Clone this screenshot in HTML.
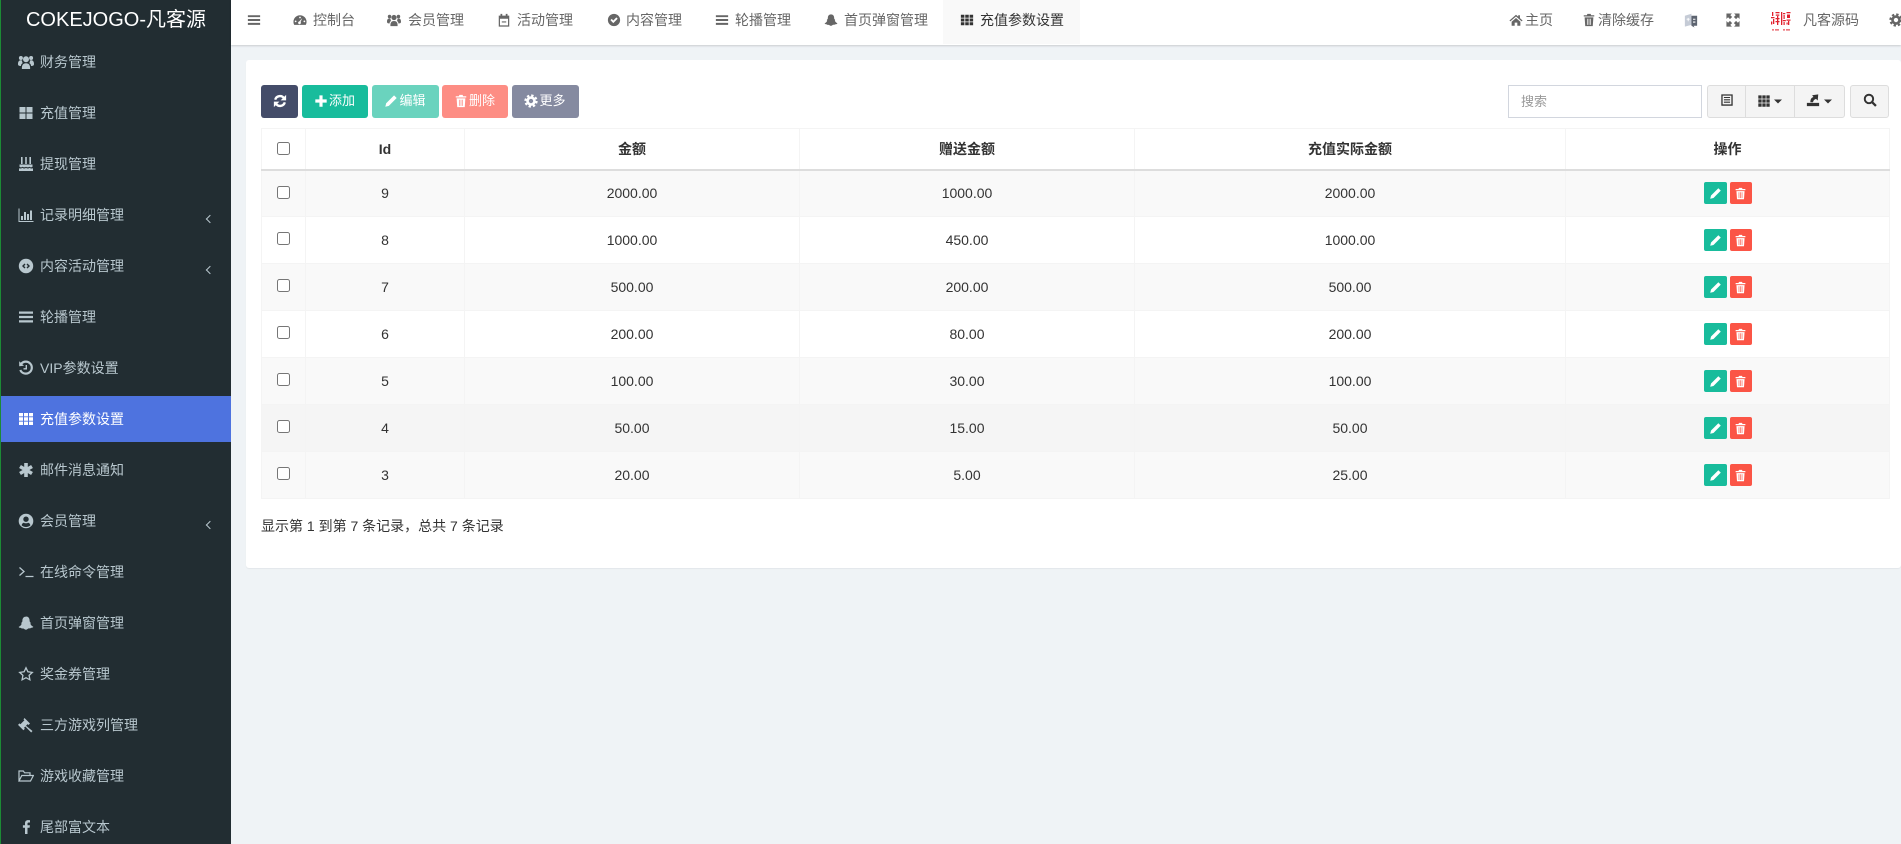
<!DOCTYPE html>
<html lang="zh-CN"><head><meta charset="utf-8"><title>充值参数设置</title>
<style>
*{box-sizing:border-box}
html,body{margin:0;padding:0;width:1901px;height:844px;overflow:hidden;background:#eff3f6;font:14px/20px "Liberation Sans","Noto Sans CJK SC",sans-serif;color:#333}
#side{position:absolute;left:0;top:0;width:231px;height:844px;background:#222d32;border-left:1px solid #1c8a35;overflow:hidden}
#logo{position:absolute;left:0;top:6px;width:230px;text-align:center;color:#fff;font-size:20px;line-height:28px}
.m{position:absolute;left:0;width:230px;height:46px;color:#b8c7ce}
.m.on{background:#4e73df;color:#fff}
.m span{position:absolute;left:39px;top:13px;white-space:nowrap}
.m svg{position:absolute;left:17px;top:15px;width:16px;height:16px}
.m i{position:absolute;left:206px;top:24px;width:6px;height:6px;border-left:1.4px solid #b8c7ce;border-bottom:1.4px solid #b8c7ce;transform:rotate(45deg)}
#top{position:absolute;left:231px;top:0;width:1670px;height:45px;background:#fff;box-shadow:0 1px 2px rgba(0,0,0,.16)}
.t{position:absolute;top:10px;color:#666;white-space:nowrap}
.ic{position:absolute;top:13px;width:14px;height:14px;color:#666}
#act{position:absolute;left:712px;top:0;width:137px;height:44px;background:#f9f9f9}
#panel{position:absolute;left:246px;top:60px;width:1655px;height:508px;background:#fff;border-radius:3px;box-shadow:0 1px 1px rgba(0,0,0,.05)}
.b{position:absolute;top:85px;height:33px;border-radius:3px;color:#fff;font-size:13px;line-height:32px;white-space:nowrap;text-align:center}
.b svg{width:14px;height:14px;vertical-align:-2.5px;margin:0 1px 0 -1px}
#tb{position:absolute;left:261px;top:128px;width:1628px;border-collapse:collapse;table-layout:fixed}
#tb th,#tb td{border:1px solid #f4f4f4;padding:0;text-align:center;font-size:14px;position:relative}
#tb th{height:41px;border-bottom:2px solid #ddd;font-weight:bold;color:#333}
#tb td{height:47px;color:#333}
#tb tr.s td{background:#f9f9f9}
#tb tr.h td{background:#f5f5f5}
#tb tr.w td{background:#fff}
#tb input{position:absolute;left:15px;top:13px;margin:0;width:13px;height:13px}
#tb td input{top:15px}
.ab{display:inline-block;height:22px;border-radius:2px;vertical-align:middle;position:relative}
.ab svg{position:absolute;left:50%;top:50%;width:13px;height:13px;margin:-6.5px 0 0 -6.5px;color:#fff}
.e{width:23px;background:#18bc9c;margin-right:3px}
.d{width:22px;background:#fb5546}
#q{position:absolute;left:1508px;top:85px;width:194px;height:33px;border:1px solid #d2d6de;background:#fff;color:#999;font-size:13px;line-height:32px;padding-left:12px}
.g{position:absolute;top:85px;height:33px;background:#f4f4f4;border:1px solid #ddd;color:#333}
.g svg{position:absolute;width:14px;height:14px;top:7px;color:#333}
.g svg.c{width:8px;height:8px;top:11px}
</style></head><body>
<svg width="0" height="0" style="position:absolute"><defs>
<symbol id="bars" viewBox="0 0 16 16"><path fill="currentColor" d="M1 2.500h14v2.200H1zM1 6.900h14v2.200H1zM1 11.300h14v2.200H1z"/></symbol>
<symbol id="dash" viewBox="0 0 16 16"><path fill="currentColor" fill-rule="evenodd" d="M8 2.500A7.500 7.500 0 0 0 .5 10c0 1.300.3 2.500.9 3.500h13.200c.6-1 .9-2.200.9-3.500A7.500 7.500 0 0 0 8 2.500zM3 8.500a1 1 0 1 0 0 2 1 1 0 0 0 0-2zM8 4.200a1 1 0 1 0 0 2 1 1 0 0 0 0-2zM13 8.500a1 1 0 1 0 0 2 1 1 0 0 0 0-2zM10.600 5.800 7.200 9.600a1.600 1.600 0 1 0 1.500.6z"/></symbol>
<symbol id="users" viewBox="0 0 16 16"><g fill="currentColor"><circle cx="8" cy="5.200" r="3"/><path d="M3.900 15c-.3-4 1.300-5.800 4.100-5.800s4.400 1.800 4.100 5.800z"/><circle cx="2.900" cy="4" r="2"/><circle cx="13.100" cy="4" r="2"/><path d="M0 10c0-2.500 1-3.800 2.900-3.800.5 0 .9.100 1.300.3-.3.900 0 1.800.6 2.500C3.500 9.700 3 10.700 2.900 12 1 12 0 11.500 0 10zM16 10c0-2.500-1-3.800-2.900-3.800-.5 0-.9.100-1.300.3.300.900 0 1.800-.6 2.500 1.300.7 1.800 1.700 1.900 3 1.900 0 2.900-.5 2.900-2z"/></g></symbol>
<symbol id="cal" viewBox="0 0 16 16"><path fill="currentColor" fill-rule="evenodd" d="M2 3h2V1h2v2h4V1h2v2h2v12.500H2zM3.400 6.500v7.600h9.200V6.500zM5.500 9.500h5v1.300h-5z"/></symbol>
<symbol id="check" viewBox="0 0 16 16"><path fill="currentColor" fill-rule="evenodd" d="M8 1a7 7 0 1 0 0 14A7 7 0 0 0 8 1zM3.900 8.200l1.500-1.500 1.800 1.800 3.500-3.500 1.500 1.500-5 5z"/></symbol>
<symbol id="ghost" viewBox="0 0 16 16"><path fill="currentColor" d="M8 1.500c2.300 0 3.600 1.700 3.600 4 0 1 .2 1.400.9 2 .5.500.2 1-.2 1.100.6 1.900 2.400 2.800 3 3.200-.2 1-1.800.9-2.600 1.200-.6.800-1.500.1-2.600.6-.8.600-1.400 1.100-2.100 1.100s-1.300-.5-2.100-1c-1.100-.5-2 .2-2.600-.6-.8-.3-2.400-.2-2.600-1.200.6-.4 2.400-1.300 3-3.200-.4-.1-.7-.6-.2-1.100.7-.6.9-1 .9-2 0-2.300 1.300-4 3.600-4z"/></symbol>
<symbol id="th" viewBox="0 0 16 16"><path fill="currentColor" d="M1 2h4v3.400H1zM6 2h4v3.400H6zM11 2h4v3.400h-4zM1 6.300h4v3.400H1zM6 6.300h4v3.400H6zM11 6.300h4v3.400h-4zM1 10.600h4V14H1zM6 10.600h4V14H6zM11 10.600h4V14h-4z"/></symbol>
<symbol id="th2" viewBox="0 0 16 16"><path fill="currentColor" d="M1.500 1.500h3.800v3.800H1.500zM6.100 1.500h3.800v3.800H6.100zM10.700 1.500h3.800v3.800h-3.800zM1.500 6.100h3.800v3.800H1.500zM6.100 6.100h3.800v3.800H6.100zM10.700 6.100h3.800v3.800h-3.800zM1.500 10.700h3.800v3.800H1.500zM6.100 10.700h3.800v3.800H6.100zM10.700 10.700h3.800v3.800h-3.800z"/></symbol>
<symbol id="thl" viewBox="0 0 16 16"><path fill="currentColor" d="M1.500 2h6v5.500h-6zM8.500 2h6v5.500h-6zM1.500 8.500h6V14h-6zM8.500 8.500h6V14h-6z"/></symbol>
<symbol id="home" viewBox="0 0 16 16"><path fill="currentColor" d="M8 2 .5 8.500l1 1L8 4l6.500 5.500 1-1-3-2.600V2.500h-2v1.700zM3 10v4.500h3.500V11h3v3.500H13V10L8 5.700z"/></symbol>
<symbol id="trash" viewBox="0 0 16 16"><path fill="currentColor" fill-rule="evenodd" d="M5.500 2.500 6.200 1h3.600l.7 1.500H14V4H2V2.500zM3 5h10l-.7 10H3.700zM5.700 6.500v7h.8v-7zM7.600 6.500v7h.8v-7zM9.500 6.500v7h.8v-7z"/></symbol>
<symbol id="lang" viewBox="0 0 16 16"><path fill="#c5cbd6" d="M1 2.500 8.500.3V13L1 15z"/><path fill="#5d6470" d="M8.500 2.500H15V14h-4l1 2-3.500-2z"/><path fill="#fff" d="M3 6h3.500v1H3zM4.300 5h1v3.800h-1zM10.300 6h2.700v1.200h-2.700zM10.300 9.200h2.700v1.200h-2.700z"/></symbol>
<symbol id="exp" viewBox="0 0 16 16"><path fill="currentColor" d="M.5.500h6.300L4.900 2.400 7 4.500 4.500 7 2.400 4.900.5 6.800zM15.500.5v6.300l-1.900-1.900L11.500 7 9 4.500l2.100-2.100L9.200.5zM.5 15.500V9.200l1.900 1.900L4.500 9 7 11.500l-2.100 2.100 1.900 1.900zM15.500 15.500H9.200l1.900-1.900L9 11.500 11.500 9l2.100 2.100 1.900-1.900z"/></symbol>
<symbol id="gear" viewBox="0 0 16 16"><circle cx="8" cy="8" r="4" fill="none" stroke="currentColor" stroke-width="3"/><circle cx="8" cy="8" r="6.300" fill="none" stroke="currentColor" stroke-width="2.600" stroke-dasharray="2.700 2.250"/></symbol>
<symbol id="ref" viewBox="0 0 16 16"><path fill="none" stroke="currentColor" stroke-width="2.700" d="M2.500 6.500A5.600 5.600 0 0 1 12.500 4.800M13.500 9.500A5.600 5.600 0 0 1 3.500 11.200"/><path fill="currentColor" d="M15 1v6.300H8.700zM1 15V8.700h6.300z"/></symbol>
<symbol id="plus" viewBox="0 0 16 16"><path fill="currentColor" d="M6.200 1.500h3.600v4.700h4.700v3.600H9.800v4.700H6.200V9.800H1.500V6.200h4.700z"/></symbol>
<symbol id="pen" viewBox="0 0 16 16"><path fill="currentColor" d="M11.500 1.500l3 3-9 9-4 1 1-4z"/></symbol>
<symbol id="list" viewBox="0 0 16 16"><path fill="currentColor" fill-rule="evenodd" d="M1.500 1.500h13v13h-13zM3 3v10h10V3zM4.500 4.500h7v1.200h-7zM4.500 7.200h7v1.200h-7zM4.500 9.900h7v1.200h-7z"/></symbol>
<symbol id="expt" viewBox="0 0 16 16"><path fill="currentColor" d="M1 11.300h14V15H1zM5 10.500c0-3 .8-5.200 3.500-6L7 2.500l7-1-.6 7-2-1.800c-1.700.6-3 1.600-3.400 3.800z"/></symbol>
<symbol id="srch" viewBox="0 0 16 16"><circle cx="6.800" cy="6.800" r="4.800" fill="none" stroke="currentColor" stroke-width="2.200"/><path stroke="currentColor" stroke-width="2.600" d="M10.300 10.300l4.500 4.500"/></symbol>
<symbol id="car" viewBox="0 0 8 8"><path fill="currentColor" d="M0 2.500h8L4 6.500z"/></symbol>
<symbol id="cake" viewBox="0 0 16 16"><path fill="currentColor" d="M3 1h1.600v7H3zM7.200 1h1.600v7H7.200zM11.400 1h1.600v7h-1.600zM1.500 8.500h13v2.200c-1 .8-2 .8-3.200 0-1 .8-2.200.8-3.300 0-1.100.8-2.300.8-3.300 0-1.200.8-2.200.8-3.200 0zM1 12.200c1.300.5 2.300.4 3.400-.3 1.200.8 2.300.8 3.600 0 1.300.8 2.400.8 3.600 0 1.100.7 2.100.8 3.400.3V15H1z"/></symbol>
<symbol id="bar" viewBox="0 0 16 16"><path fill="currentColor" d="M.5 1.500h1v12.500h14v1H.5zM3 9h2v4H3zM6 5h2v8H6zM9 7h2v6H9zM12 3.500h2V13h-2z"/></symbol>
<symbol id="circ" viewBox="0 0 16 16"><path fill="currentColor" fill-rule="evenodd" d="M8 .8a7.200 7.200 0 1 0 0 14.400A7.200 7.200 0 0 0 8 .8zM4 8l2.500-2.500 1 1L6 8l1.500 1.500-1 1zM12 8 9.500 10.500l-1-1L10 8 8.500 6.500l1-1z"/></symbol>
<symbol id="hist" viewBox="0 0 16 16"><path fill="none" stroke="currentColor" stroke-width="2.200" d="M3.200 3.800A6 6 0 1 1 2.300 10"/><path fill="currentColor" d="M1.200 1.300 6 5.800l-4.800.4z"/><path fill="none" stroke="currentColor" stroke-width="1.400" d="M8.300 5v3.800h-2.800"/></symbol>
<symbol id="ast" viewBox="0 0 16 16"><path stroke="currentColor" stroke-width="3.600" d="M8 1v14M2 4.500l12 7M14 4.500l-12 7"/></symbol>
<symbol id="ucirc" viewBox="0 0 16 16"><path fill="currentColor" fill-rule="evenodd" d="M8 .7a7.300 7.300 0 1 0 0 14.600A7.300 7.300 0 0 0 8 .7zM8 3.500a2.700 2.700 0 1 1 0 5.400 2.700 2.700 0 0 1 0-5.400zM3.600 12.300C4 10.500 5 9.700 6 9.700c.5.400 1.200.6 2 .6s1.500-.2 2-.6c1 0 2 .8 2.400 2.600-1 1.100-2.600 1.700-4.400 1.700s-3.400-.6-4.400-1.700z"/></symbol>
<symbol id="term" viewBox="0 0 16 16"><path fill="none" stroke="currentColor" stroke-width="1.300" d="M1.500 3.500 6 7.500l-4.500 4M7.500 12.500h8"/></symbol>
<symbol id="star" viewBox="0 0 16 16"><path fill="none" stroke="currentColor" stroke-width="1.300" d="M8 1.800l1.900 4 4.400.6-3.200 3 .8 4.400L8 11.700l-3.900 2.100.8-4.400-3.200-3 4.400-.6z"/></symbol>
<symbol id="gavel" viewBox="0 0 16 16"><path fill="currentColor" d="M6.500 1 12 6.500 10.500 8 9.600 7.100 8 8.700l6.500 5.300-1.300 1.500-5.900-6L6 10.900l.9.900L5.400 13.300 0 7.900 1.500 6.400l.9.900L6.400 3.300l-.9-.9z"/></symbol>
<symbol id="fold" viewBox="0 0 16 16"><path fill="none" stroke="currentColor" stroke-width="1.200" d="M1 13V3h4.300l1.300 1.800h5.400v2.700M1 13l2.800-5.500h11.600L12.500 13z"/></symbol>
<symbol id="fb" viewBox="0 0 16 16"><path fill="currentColor" d="M9.500 15V8.700h2.100l.3-2.500H9.500V4.700c0-.7.2-1.200 1.200-1.200H12V1.200c-.2 0-1-.1-1.900-.1C8.200 1.100 7 2.200 7 4.300v1.900H4.900v2.500H7V15z"/></symbol>
</defs></svg>

<div id="side">
<div id="logo">COKEJOGO-凡客源</div>
<div class="m" style="top:39px"><svg><use href="#users"/></svg><span>财务管理</span></div>
<div class="m" style="top:90px"><svg><use href="#thl"/></svg><span>充值管理</span></div>
<div class="m" style="top:141px"><svg><use href="#cake"/></svg><span>提现管理</span></div>
<div class="m" style="top:192px"><svg><use href="#bar"/></svg><span>记录明细管理</span><i></i></div>
<div class="m" style="top:243px"><svg><use href="#circ"/></svg><span>内容活动管理</span><i></i></div>
<div class="m" style="top:294px"><svg><use href="#bars"/></svg><span>轮播管理</span></div>
<div class="m" style="top:345px"><svg><use href="#hist"/></svg><span>VIP参数设置</span></div>
<div class="m on" style="top:396px"><svg><use href="#th"/></svg><span>充值参数设置</span></div>
<div class="m" style="top:447px"><svg><use href="#ast"/></svg><span>邮件消息通知</span></div>
<div class="m" style="top:498px"><svg><use href="#ucirc"/></svg><span>会员管理</span><i></i></div>
<div class="m" style="top:549px"><svg><use href="#term"/></svg><span>在线命令管理</span></div>
<div class="m" style="top:600px"><svg><use href="#ghost"/></svg><span>首页弹窗管理</span></div>
<div class="m" style="top:651px"><svg><use href="#star"/></svg><span>奖金券管理</span></div>
<div class="m" style="top:702px"><svg><use href="#gavel"/></svg><span>三方游戏列管理</span></div>
<div class="m" style="top:753px"><svg><use href="#fold"/></svg><span>游戏收藏管理</span></div>
<div class="m" style="top:804px"><svg><use href="#fb"/></svg><span>尾部富文本</span></div>
</div>

<div id="top">
<div id="act"></div>
<svg class="ic" style="left:16px"><use href="#bars"/></svg>
<svg class="ic" style="left:62px"><use href="#dash"/></svg><span class="t" style="left:82px">控制台</span>
<svg class="ic" style="left:156px"><use href="#users"/></svg><span class="t" style="left:177px">会员管理</span>
<svg class="ic" style="left:266px"><use href="#cal"/></svg><span class="t" style="left:286px">活动管理</span>
<svg class="ic" style="left:376px"><use href="#check"/></svg><span class="t" style="left:395px">内容管理</span>
<svg class="ic" style="left:484px"><use href="#bars"/></svg><span class="t" style="left:504px">轮播管理</span>
<svg class="ic" style="left:593px"><use href="#ghost"/></svg><span class="t" style="left:613px">首页弹窗管理</span>
<svg class="ic" style="left:729px;color:#333"><use href="#th"/></svg><span class="t" style="left:749px;color:#333">充值参数设置</span>
<svg class="ic" style="left:1278px"><use href="#home"/></svg><span class="t" style="left:1294px">主页</span>
<svg class="ic" style="left:1351px"><use href="#trash"/></svg><span class="t" style="left:1367px">清除缓存</span>
<svg class="ic" style="left:1453px;top:13px;height:15px"><use href="#lang"/></svg>
<svg class="ic" style="left:1495px"><use href="#exp"/></svg>
<svg style="position:absolute;left:1540px;top:12px;width:20px;height:20px" viewBox="0 0 20 20"><g fill="#e0202c"><path d="M1 0h1.300v4H1zM0 5h3.500v1.300H0zM2 7h1.300v5H2zM0 9.500h1.300v3H0zM4.500 0h4v1.200h-4zM4.800 2.500h3.500v1.200H4.800zM6 4h1.300v9H6zM4.500 6h4v1.300h-4zM4.500 9h4v1.300h-4zM10 0h1.300v13H10zM12 1h2.300v1.200H12zM12.500 3h1.200v4h-1.200zM11.800 8h3v1.200h-3zM12.500 10h1.200v3h-1.200zM15.500 0h4v1.300h-4zM16 2.500h3v3.500h-3zM15.500 7.500h4v1.200h-4zM17 9h1.300v4H17zM15.500 10.500h1.200v2h-1.200z"/><path opacity=".8" d="M1 17.300h2v1.200H1zM4 17.300h4v1.200H4zM12 17.300h2v1.200h-2zM15 17.300h4v1.200h-4z"/></g></svg>
<span class="t" style="left:1572px">凡客源码</span>
<svg class="ic" style="left:1658px"><use href="#gear"/></svg>
</div>

<div id="panel"></div>
<div class="b" style="left:261px;width:37px;background:#444c69"><svg style="margin:0"><use href="#ref"/></svg></div>
<div class="b" style="left:302px;width:66px;background:#18bc9c"><svg><use href="#plus"/></svg>添加</div>
<div class="b" style="left:372px;width:67px;background:#6ad3be"><svg><use href="#pen"/></svg>编辑</div>
<div class="b" style="left:442px;width:66px;background:#fd8d84"><svg><use href="#trash"/></svg>删除</div>
<div class="b" style="left:512px;width:67px;background:#858aa0"><svg><use href="#gear"/></svg>更多</div>

<div id="q">搜索</div>
<div class="g" style="left:1707px;width:39px;border-radius:3px 0 0 3px"><svg style="left:12px"><use href="#list"/></svg></div>
<div class="g" style="left:1745px;width:50px;border-left:1px solid #ddd"><svg style="left:11px;top:8px"><use href="#th2"/></svg><svg class="c" style="left:28px"><use href="#car"/></svg></div>
<div class="g" style="left:1794px;width:51px;border-radius:0 3px 3px 0"><svg style="left:11px"><use href="#expt"/></svg><svg class="c" style="left:29px"><use href="#car"/></svg></div>
<div class="g" style="left:1850px;width:39px;border-radius:3px"><svg style="left:12px"><use href="#srch"/></svg></div>

<table id="tb">
<colgroup><col style="width:44px"><col style="width:159px"><col style="width:335px"><col style="width:335px"><col style="width:431px"><col style="width:324px"></colgroup>
<thead><tr><th><input type="checkbox"></th><th>Id</th><th>金额</th><th>赠送金额</th><th>充值实际金额</th><th>操作</th></tr></thead>
<tbody>
<tr class="s"><td><input type="checkbox"></td><td>9</td><td>2000.00</td><td>1000.00</td><td>2000.00</td><td><span class="ab e"><svg><use href="#pen"/></svg></span><span class="ab d"><svg><use href="#trash"/></svg></span></td></tr>
<tr class="w"><td><input type="checkbox"></td><td>8</td><td>1000.00</td><td>450.00</td><td>1000.00</td><td><span class="ab e"><svg><use href="#pen"/></svg></span><span class="ab d"><svg><use href="#trash"/></svg></span></td></tr>
<tr class="s"><td><input type="checkbox"></td><td>7</td><td>500.00</td><td>200.00</td><td>500.00</td><td><span class="ab e"><svg><use href="#pen"/></svg></span><span class="ab d"><svg><use href="#trash"/></svg></span></td></tr>
<tr class="w"><td><input type="checkbox"></td><td>6</td><td>200.00</td><td>80.00</td><td>200.00</td><td><span class="ab e"><svg><use href="#pen"/></svg></span><span class="ab d"><svg><use href="#trash"/></svg></span></td></tr>
<tr class="s"><td><input type="checkbox"></td><td>5</td><td>100.00</td><td>30.00</td><td>100.00</td><td><span class="ab e"><svg><use href="#pen"/></svg></span><span class="ab d"><svg><use href="#trash"/></svg></span></td></tr>
<tr class="h"><td><input type="checkbox"></td><td>4</td><td>50.00</td><td>15.00</td><td>50.00</td><td><span class="ab e"><svg><use href="#pen"/></svg></span><span class="ab d"><svg><use href="#trash"/></svg></span></td></tr>
<tr class="s"><td><input type="checkbox"></td><td>3</td><td>20.00</td><td>5.00</td><td>25.00</td><td><span class="ab e"><svg><use href="#pen"/></svg></span><span class="ab d"><svg><use href="#trash"/></svg></span></td></tr>
</tbody></table>
<div style="position:absolute;left:261px;top:516px;white-space:nowrap">显示第 1 到第 7 条记录，总共 7 条记录</div>
</body></html>
